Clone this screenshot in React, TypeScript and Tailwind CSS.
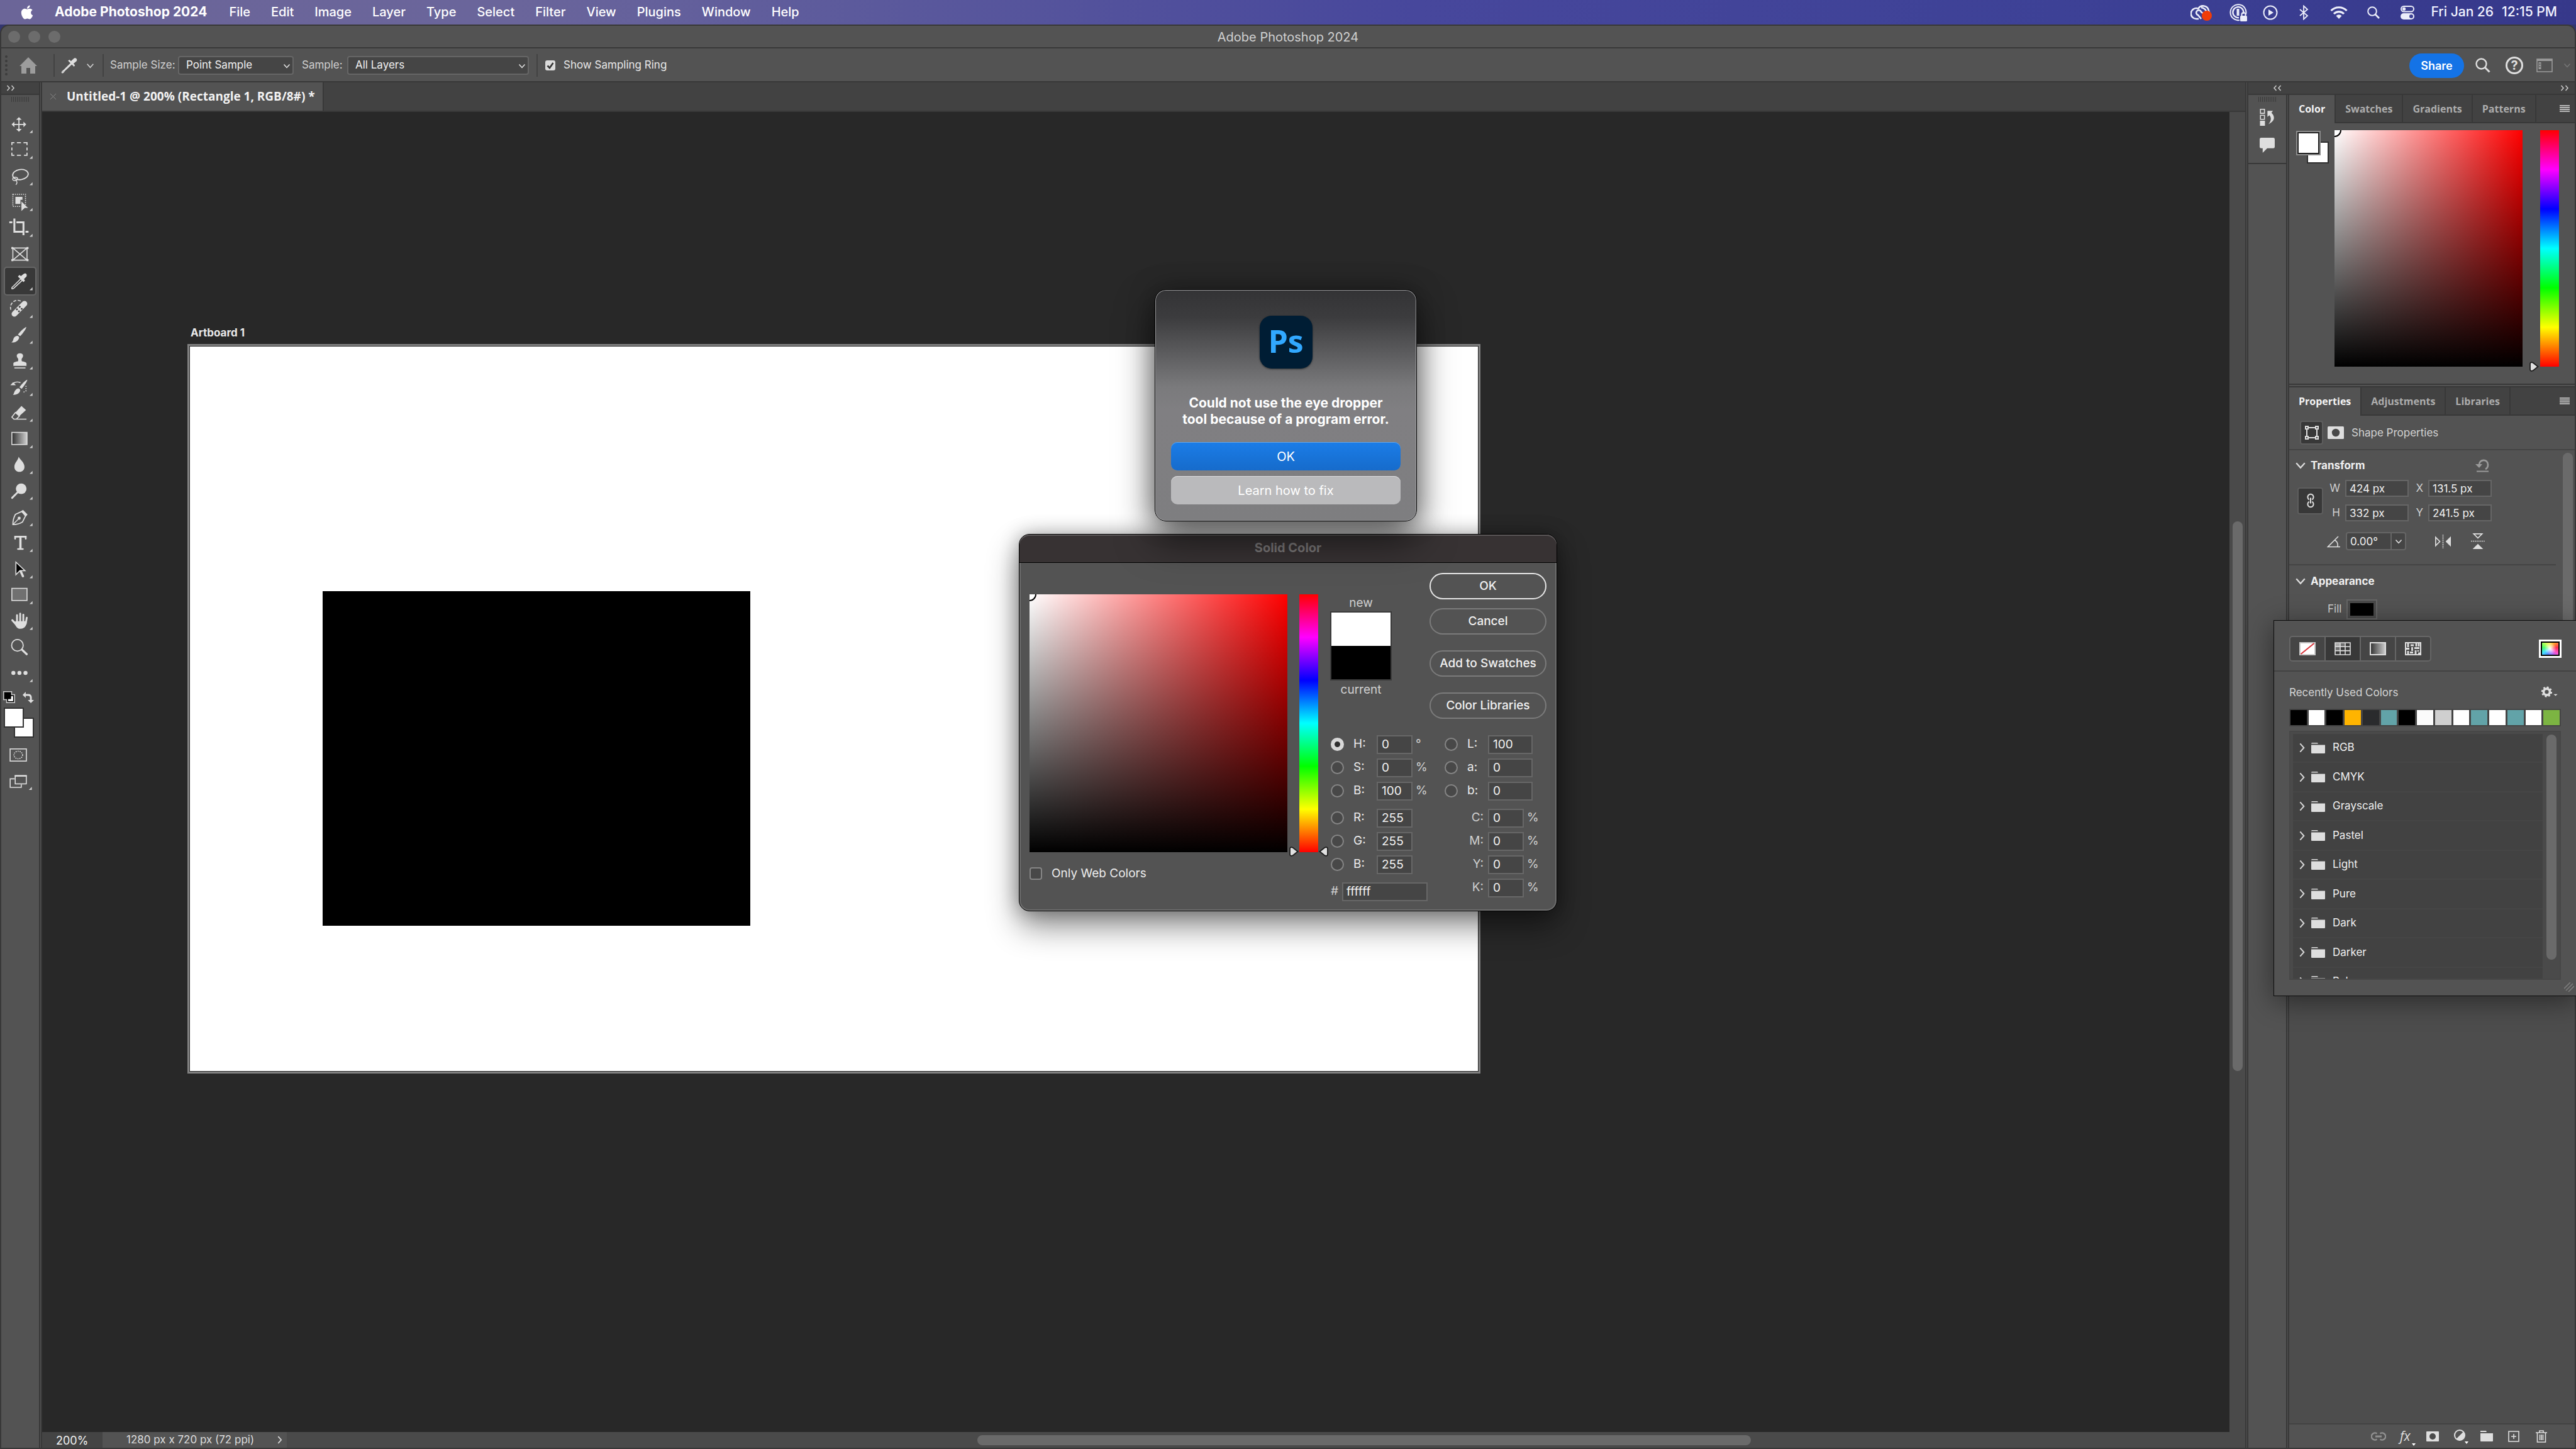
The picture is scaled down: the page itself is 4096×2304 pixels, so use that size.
import React from "react";
import clsx from "clsx";

/* ---------- small shared drawings ---------- */

const INK = "#dedede";

function Chevron({ dir = "down", className = "" }: { dir?: "down" | "right"; className?: string }) {
  return (
    <svg viewBox="0 0 12 12" fill="none" stroke="currentColor" strokeWidth="1.5" className={className} aria-hidden="true">
      {dir === "down" ? <path d="M1.5 3.5 6 8.5l4.5-5" /> : <path d="M4 1l4.5 5L4 11" />}
    </svg>
  );
}

function DoubleChevron({ dir, className = "" }: { dir: "left" | "right"; className?: string }) {
  return (
    <svg viewBox="0 0 14 12" fill="none" stroke="#c8c8c8" strokeWidth="1.6" className={className} aria-hidden="true">
      {dir === "right" ? <path d="M1.5 2 5 6l-3.500 4M8.500 2 12 6l-3.500 4" /> : <path d="M5.500 2 2 6l3.500 4M12.500 2 9 6l3.500 4" />}
    </svg>
  );
}

function Grip() {
  return (
    <div className="flex h-[8px] gap-[2px]">
      {Array.from({ length: 10 }, (_, i) => (
        <div key={i} className="w-px bg-[#3a3a3a]" />
      ))}
    </div>
  );
}

function Hamburger() {
  return (
    <button aria-label="Panel menu" className="flex h-[12px] w-[16px] flex-col justify-between">
      {[0, 1, 2, 3].map((i) => (
        <span key={i} className="block h-[2px] w-full bg-[#b4b4b4]" />
      ))}
    </button>
  );
}

/* ---------- menu bar ---------- */

const MENUS = ["File", "Edit", "Image", "Layer", "Type", "Select", "Filter", "View", "Plugins", "Window", "Help"];

function MenuBar() {
  return (
    <header className="flex h-[39px] shrink-0 items-center bg-[linear-gradient(to_right,#6b6598_0%,#6a659b_20%,#5c5a9c_33%,#47479c_55%,#3d4196_80%,#36388a_100%)] pr-[30px] pl-[32px] text-[20px] text-white">
      <svg viewBox="0 0 384 512" className="h-[25px] w-[22px]" fill="white" aria-label="Apple">
        <path d="M318.700 268.700c-.2-36.700 16.400-64.400 50-84.800-18.800-26.900-47.200-41.700-84.700-44.600-35.500-2.800-74.300 20.700-88.500 20.700-15 0-49.400-19.700-76.400-19.700C63.300 141.200 4 184.800 4 273.500q0 39.300 14.400 81.200c12.800 36.700 59 126.700 107.200 125.200 25.200-.6 43-17.900 75.800-17.900 31.800 0 48.300 17.900 76.400 17.900 48.600-.7 90.400-82.500 102.600-119.300-65.200-30.700-61.700-90-61.700-91.900zm-56.600-164.200c27.300-32.400 24.800-61.900 24-72.500-24.100 1.400-52 16.400-67.900 34.900-17.500 19.800-27.800 44.300-25.600 71.900 26.100 2 49.900-11.400 69.500-34.300z" />
      </svg>
      <nav className="ml-[33px] flex items-baseline gap-[33px] pb-[2px]">
        <button className="mr-[2px] text-[21px] font-bold">Adobe Photoshop 2024</button>
        {MENUS.map((m) => (
          <button key={m} className="font-medium">{m}</button>
        ))}
      </nav>
      <div className="ml-auto flex items-center">
        <svg viewBox="0 0 34 28" className="mr-[27px] h-[28px] w-[34px]" fill="none" stroke="#eceefa" strokeWidth="2.600">
          <path d="M13 24H10a8.500 8.500 0 1 1 2-16.500M12 8.500A9 9 0 0 1 29 11c.8 1.500 1 3 1 4" />
          <path d="M17 24 12 18a4 4 0 1 1 5-5l4 3M17 6a10 10 0 0 1 9 9" />
          <circle cx="26" cy="19" r="8" fill="#f03c08" stroke="none" />
        </svg>
        <svg viewBox="0 0 30 30" className="mr-[24px] h-[30px] w-[30px]" fill="none" stroke="#eceefa" strokeWidth="2">
          <path d="M17 27a12.500 12.500 0 1 1 10-9" />
          <path d="M16 23a8.500 8.500 0 1 1 7-6" strokeWidth="2.400" />
          <path d="M14.500 9v11" strokeWidth="4" />
          <rect x="18" y="20" width="11" height="9" rx="1.500" fill="#eceefa" stroke="none" />
          <path d="M20.500 20v-2a3 3 0 0 1 6 0v2" />
        </svg>
        <svg viewBox="0 0 24 24" className="mr-[33px] h-[24px] w-[24px]" fill="none" stroke="#eceefa" strokeWidth="2">
          <circle cx="12" cy="12" r="10.500" />
          <path d="M9 7v10l8-5z" fill="#eceefa" stroke="none" />
        </svg>
        <svg viewBox="0 0 16 24" className="mr-[34px] h-[24px] w-[16px]" fill="none" stroke="#eceefa" strokeWidth="1.800">
          <path d="M2 7l12 10-6 5.500v-21L14 7 2 17" />
        </svg>
        <svg viewBox="0 0 28 20" className="mr-[31px] h-[20px] w-[28px]" fill="none" stroke="#eceefa" strokeWidth="3.200">
          <path d="M1.500 7a17.500 17.500 0 0 1 25 0M6 12a11.200 11.200 0 0 1 16 0" />
          <path d="M9.500 15.200a6.300 6.300 0 0 1 9 0L14 20z" fill="#eceefa" stroke="none" />
        </svg>
        <svg viewBox="0 0 20 20" className="mr-[33px] h-[20px] w-[20px]" fill="none" stroke="#eceefa" strokeWidth="2">
          <circle cx="8" cy="8" r="6.800" />
          <path d="M13 13l6 6" strokeWidth="2.600" />
        </svg>
        <svg viewBox="0 0 22 22" className="mr-[27px] h-[22px] w-[22px]" fill="none" stroke="#eceefa" strokeWidth="2">
          <rect x="1" y="1" width="20" height="8.500" rx="4.250" />
          <circle cx="5.500" cy="5.200" r="2.600" fill="#eceefa" stroke="none" />
          <rect x="0" y="12" width="22" height="10" rx="5" fill="#eceefa" stroke="none" />
          <circle cx="17" cy="17" r="3" fill="#3b3f93" stroke="none" />
        </svg>
        <span className="flex gap-[13px] pb-[2px] text-[21px] font-medium text-[#f2f3ff]">
          <span>Fri Jan 26</span>
          <span>12:15 PM</span>
        </span>
      </div>
    </header>
  );
}

/* ---------- title + options bars ---------- */

function TitleBar() {
  return (
    <div className="relative flex h-[36px] shrink-0 items-center border-b-2 border-[#383838] pl-[11px]">
      <div className="flex gap-[13px]">
        {["Close", "Minimize", "Zoom"].map((n) => (
          <button key={n} aria-label={n} className="size-[19px] rounded-full bg-[#6c6c6c]" />
        ))}
      </div>
      <h1 className="absolute inset-x-0 pt-[2px] text-center text-[20px] text-[#d0d0d0]">Adobe Photoshop 2024</h1>
    </div>
  );
}

function Select({ id, value, width }: { id: string; value: string; width: string }) {
  return (
    <div className={clsx("relative", width)}>
      <select id={id} defaultValue={value} className="h-[30px] w-full appearance-none rounded-[4px] border-2 border-[#666] bg-[#454545] pl-[11px] text-[17px] text-[#f0f0f0]">
        <option>{value}</option>
      </select>
      <Chevron className="pointer-events-none absolute top-[10px] right-[5px] size-[12px] text-[#e6e6e6]" />
    </div>
  );
}

function Eyedropper({ className = "" }: { className?: string }) {
  return (
    <svg viewBox="19 10 34 34" className={className} fill="none" aria-hidden="true">
      <path d="M40 21 25 36c-2 2-5 2-4 5 3 1 3-2 5-4l15-14z" stroke={INK} strokeWidth="2" />
      <path d="M33 17l3-2 3 3 5-5c4-4 9 1 6 5l-6 5 3 3-2 3z" fill={INK} />
    </svg>
  );
}

function OptionsBar() {
  const sep = <div className="h-[36px] w-[2px] bg-[#424242]" />;
  return (
    <div className="flex h-[54px] shrink-0 items-center border-b-2 border-[#383838] pt-[2px] text-[17px] text-[#cfcfcf]">
      <div className="ml-[6px] h-[32px] w-0 border-l-4 border-dotted border-[#3c3c3c]" />
      <button aria-label="Home" className="ml-[19px]">
        <svg viewBox="0 0 28 26" className="h-[26px] w-[28px]" fill="#9c9c9c">
          <path d="M14 0 28 14h-3v12h-8v-9h-6v9H3V14H0z" />
        </svg>
      </button>
      <div className="ml-[26px]">{sep}</div>
      <button aria-label="Eyedropper tool presets" className="ml-[10px] flex items-center gap-[13px]">
        <Eyedropper className="size-[27px]" />
        <Chevron className="size-[13px]" />
      </button>
      <div className="mr-[10px] ml-[13px]">{sep}</div>
      <label htmlFor="sample-size" className="w-[108px]">Sample Size:</label>
      <Select id="sample-size" value="Point Sample" width="w-[184px]" />
      <label htmlFor="sample-layers" className="ml-[13px] w-[72px]">Sample:</label>
      <Select id="sample-layers" value="All Layers" width="w-[289px]" />
      <div className="mr-[12px] ml-[12px]">{sep}</div>
      <label className="flex items-center gap-[13px] text-[#e8e8e8]">
        <span className="relative size-[16px]">
          <input type="checkbox" defaultChecked className="block size-[16px] appearance-none rounded-[3px] bg-[#dcdcdc]" />
          <svg viewBox="0 0 16 16" className="pointer-events-none absolute inset-0 size-[16px]" fill="none" stroke="#333" strokeWidth="2.600">
            <path d="M3.500 8.500 7 12l5.500-8" />
          </svg>
        </span>
        Show Sampling Ring
      </label>
      <div className="ml-auto flex items-center pr-[6px]">
        <button className="h-[39px] w-[87px] rounded-full bg-[#1473e6] text-[18px] font-semibold text-white">Share</button>
        <svg viewBox="0 0 24 24" className="ml-[18px] size-[24px]" fill="none" stroke={INK} strokeWidth="2.400">
          <circle cx="9.500" cy="9.500" r="8" />
          <path d="M15.500 15.500 22.500 22.500" strokeWidth="3" />
        </svg>
        <button aria-label="Help" className="ml-[24px] flex size-[28px] items-center justify-center rounded-full border-[3px] border-[#dedede] text-[20px] font-bold text-[#dedede]">?</button>
        <svg viewBox="0 0 26 22" className="ml-[21px] h-[22px] w-[26px]" fill="none" stroke="#9a9a9a" strokeWidth="1.600">
          <rect x="1" y="1" width="24" height="20" />
          <path d="M1 2.500h24" strokeWidth="3" />
          <path d="M5.500 6v11" strokeWidth="4" />
          <path d="M5.500 8v2m0 2v2" stroke="#535353" />
        </svg>
        <Chevron className="ml-[17px] size-[12px] text-[#777]" />
      </div>
    </div>
  );
}

/* ---------- toolbox ---------- */

const T: { name: string; art: React.ReactNode; more?: boolean }[] = [
  {
    name: "Move",
    art: (
      <>
        <path d="M35 17v20M25 27h20" stroke={INK} strokeWidth="2.200" />
        <path d="M35 12.500l5.500 5.500h-11zM35 41.500l5.500-5.500h-11zM20.500 27l5.500-5.500v11zM49.500 27 44 21.500v11z" fill={INK} />
      </>
    ),
  },
  {
    name: "Rectangular marquee",
    art: (
      <path
        d="M21 17v-5h5M31 12h8M44 12h7v5M51 21.500v6M51 32v5h-6M39 37h-8M26 37h-5v-5M21 27.500v-6"
        stroke={INK}
        strokeWidth="2.200"
        fill="none"
      />
    ),
  },
  {
    name: "Lasso",
    art: (
      <g fill="none" stroke={INK} strokeWidth="2.200">
        <ellipse cx="38" cy="23" rx="15.500" ry="10" transform="rotate(-8 38 23)" />
        <path d="M25 28c-4 3-3 7 2 7s7-4 4-6-8 0-8 2M28 34c4 2 4 6 1 9" strokeWidth="1.800" />
      </g>
    ),
  },
  {
    name: "Object selection",
    art: (
      <>
        <rect x="23" y="11" width="25" height="24" fill="none" stroke={INK} strokeWidth="2" strokeDasharray="2 2" />
        <path d="M28 16h14v6l-4 0v8H28z" fill={INK} />
        <path d="M39.500 24 54 38.500h-7.500L39.500 45z" fill={INK} stroke="#535353" strokeWidth="1" />
      </>
    ),
  },
  {
    name: "Crop",
    art: (
      <path d="M26 8v26h17M16 15.500h6M30 15.500h14V41M48 34h6" stroke={INK} strokeWidth="3.800" fill="none" />
    ),
  },
  {
    name: "Frame",
    more: false,
    art: (
      <>
        <path d="M23 14h28v24H23zM23 14l28 24M51 14 23 38" fill="none" stroke={INK} strokeWidth="2" />
        <path d="M20 12h4v4h-4zM50 12h4v4h-4zM20 36h4v4h-4zM50 36h4v4h-4z" fill={INK} />
      </>
    ),
  },
  {
    name: "Eyedropper",
    art: (
      <>
        <path d="M39 21 24 36c-2 2-4 2-3 5 3 1 4-1 6-3l15-14z" fill="none" stroke={INK} strokeWidth="2" />
        <path d="M33 17l3-3 3 2 5-4c4-3 8 0 6 5l-5 5 2 3-3 3z" fill={INK} />
      </>
    ),
  },
  {
    name: "Spot healing brush",
    art: (
      <>
        <path d="M26 36 46 16" stroke={INK} strokeWidth="11" strokeLinecap="round" />
        <path d="M19 28c-2-6 0-12 5-16s11-3 15-1" fill="none" stroke={INK} strokeWidth="2" strokeDasharray="6 3" />
        <g fill="#484848">
          <circle cx="36.500" cy="22" r="2" />
          <circle cx="40.500" cy="26" r="2" />
          <circle cx="31" cy="27" r="2" />
          <circle cx="35" cy="31" r="2" />
        </g>
      </>
    ),
  },
  {
    name: "Brush",
    art: (
      <>
        <path d="M33 26C38 19 46 12 49.500 11c1 1-5 11-12 18z" fill={INK} />
        <path d="M32 28.500c5 1 4 6 0 9.500-3 3-8 4-12 3.500 4-2 3-5 5-9 2-3 5-4 7-4z" fill={INK} />
      </>
    ),
  },
  {
    name: "Clone stamp",
    art: (
      <>
        <path d="M37 12c8 0 7 7 4 10-1 2-1 4 0 6 5 1 9 2 9 4v5H24v-5c0-2 4-3 9-4 1-2 1-4 0-6-3-3-4-10 4-10z" fill={INK} />
        <path d="M26 41h22" stroke={INK} strokeWidth="2" />
      </>
    ),
  },
  {
    name: "History brush",
    art: (
      <>
        <path d="M36 27c5-7 11-13 15.500-15 1 1-5 11-11 18z" fill={INK} />
        <path d="M34 29c5 1 4 6 1 9-3 3-8 4-12 4 3-2 2-6 5-9 2-3 4-4 6-4z" fill={INK} />
        <path d="M18 23l5.500-6 5.500 6z" fill={INK} />
        <path d="M24 19c4-3 10-3 14-1" fill="none" stroke={INK} strokeWidth="2" />
        <path d="M49 24v10l-7 4" fill="none" stroke={INK} strokeWidth="2" strokeDasharray="2 2.500" />
      </>
    ),
  },
  {
    name: "Eraser",
    art: (
      <>
        <path d="M40 13l9 8-13 12-8-7z" fill={INK} />
        <path d="M28 26l8 7-6 6h-5l-4-4z M27 39h23" fill="none" stroke={INK} strokeWidth="2" />
      </>
    ),
  },
  {
    name: "Gradient",
    art: <rect x="21" y="13" width="30" height="24" fill="url(#toolGradient)" stroke={INK} strokeWidth="2" />,
  },
  {
    name: "Blur",
    art: <path d="M34.500 10C37 16 46 21 46 30c0 6-4 10-10 10s-10-4-10-10c0-8 7-12 8.500-20z" fill={INK} />,
  },
  {
    name: "Dodge",
    art: (
      <>
        <circle cx="39.500" cy="22.500" r="10.500" fill={INK} />
        <path d="M32 30 21.500 40.500" stroke={INK} strokeWidth="3.600" strokeLinecap="round" />
      </>
    ),
  },
  {
    name: "Pen",
    art: (
      <>
        <path d="M41 15 28 21c-4 7-5 13-5 20 6 0 13-1 19-5l6-12z" fill="none" stroke={INK} strokeWidth="2.200" />
        <path d="M23.500 40.500 34 30" stroke={INK} strokeWidth="1.800" />
        <circle cx="35.500" cy="28.500" r="3" fill={INK} />
        <path d="M43 12l9 9-3 4-10-10z" fill={INK} />
      </>
    ),
  },
  {
    name: "Type",
    art: (
      <g fill="none" stroke={INK} strokeLinecap="round">
        <path d="M27.500 18v-4h21v4" strokeWidth="3.400" />
        <path d="M38 14v24" strokeWidth="4.400" strokeLinecap="butt" />
        <path d="M33 38.500h10" strokeWidth="3" />
      </g>
    ),
  },
  {
    name: "Path selection",
    art: (
      <>
        <path d="M38 29l5 11" stroke={INK} strokeWidth="4.400" strokeLinecap="round" />
        <path d="M29 12v25l8-8h10z" fill="#000" stroke={INK} strokeWidth="2" />
      </>
    ),
  },
  {
    name: "Rectangle",
    art: <rect x="21" y="13" width="30" height="24" fill="#707070" stroke={INK} strokeWidth="2" />,
  },
  {
    name: "Hand",
    art: (
      <>
        <path d="M31.200 15v14M37.500 12v16M43.700 14v15M50.500 20l-2 12" stroke={INK} strokeWidth="3.600" strokeLinecap="round" />
        <path d="M22 25l8 9" stroke={INK} strokeWidth="4" strokeLinecap="round" />
        <path d="M29 27h21c1 6-2 15-12 15-8 0-9-6-13-13z" fill={INK} />
      </>
    ),
  },
  {
    name: "Zoom",
    more: false,
    art: (
      <>
        <circle cx="32" cy="22.500" r="11.500" fill="none" stroke={INK} strokeWidth="2.200" />
        <path d="M41 31l9.500 9" stroke={INK} strokeWidth="4" strokeLinecap="round" />
      </>
    ),
  },
  {
    name: "Edit toolbar",
    art: (
      <g fill={INK}>
        <circle cx="24" cy="26" r="4" />
        <circle cx="36" cy="26" r="4" />
        <circle cx="48" cy="26" r="4" />
      </g>
    ),
  },
];

function Toolbox() {
  return (
    <aside className="flex w-[62px] shrink-0 flex-col border-r-2 border-[#383838]">
      <button aria-label="Expand toolbar" className="flex h-[20px] items-center border-b-2 border-[#383838] bg-[#424242] pl-[8px]">
        <DoubleChevron dir="right" className="h-[12px] w-[14px]" />
      </button>
      <div className="flex h-[25px] items-start justify-center pt-[3px]">
        <Grip />
      </div>
      <div className="flex h-[915px] flex-col">
        {T.map((t) => (
          <button
            key={t.name}
            aria-label={t.name}
            className={clsx(
              "flex min-h-0 flex-1 items-center justify-center",
              t.name === "Eyedropper" && "mx-[4px] rounded-[5px] border-2 border-[#666] bg-[#383838]",
            )}
          >
            <svg viewBox="0 0 76 52" className="h-[42px] w-[61px] shrink-0">
              <defs>
                <linearGradient id="toolGradient">
                  <stop offset="0" stopColor="#303030" />
                  <stop offset="1" stopColor="#cfcfcf" />
                </linearGradient>
              </defs>
              {t.art}
              {t.more !== false && <path d="M62 38v6h-6z" fill="#d0d0d0" />}
            </svg>
          </button>
        ))}
      </div>
      <div className="mt-[8px] flex items-center justify-between pr-[8px] pl-[3px]">
        <button aria-label="Default colors">
          <svg viewBox="0 0 24 24" className="size-[19px]">
            <path d="M0 0h18v6h6v18H6v-6H0z" fill="#c8c8c8" />
            <path d="M8 8h14v14H8z" fill="#000" />
            <path d="M10 10h10v10H10z" fill="#fff" />
            <path d="M2 2h14v14H2z" fill="#000" />
          </svg>
        </button>
        <button aria-label="Switch colors">
          <svg viewBox="0 0 22 22" className="size-[18px]">
            <path d="M6 6h5q5 0 5 5v5" fill="none" stroke={INK} strokeWidth="3.600" />
            <path d="M0 6l6-6v12zM16 22l-6-6h12z" fill={INK} />
          </svg>
        </button>
      </div>
      <div className="mt-[7px] ml-[4px] grid h-[48px] w-[48px] grid-cols-3 grid-rows-3">
        <button aria-label="Background color" className="col-span-2 col-start-2 row-span-2 row-start-2 border-2 border-[#333] bg-white" />
        <button aria-label="Foreground color" className="col-span-2 col-start-1 row-span-2 row-start-1 border-2 border-[#333] bg-white" />
      </div>
      <button aria-label="Quick mask" className="mt-[17px] ml-[13px]">
        <svg viewBox="0 0 34 26" className="h-[21px] w-[28px]" fill="none" stroke={INK} strokeWidth="2">
          <rect x="1" y="1" width="32" height="24" />
          <ellipse cx="17" cy="13" rx="8.500" ry="7.500" strokeDasharray="2 2" />
        </svg>
      </button>
      <button aria-label="Screen mode" className="mt-[21px] ml-[13px]">
        <svg viewBox="0 0 44 30" className="h-[24px] w-[36px]" fill="none" stroke={INK} strokeWidth="2">
          <path d="M10 8H1v17h22v-6M1 8h9" />
          <rect x="11" y="2" width="22" height="16" />
          <path d="M10 2h24" strokeWidth="3" />
          <path d="M44 24v6h-6z" fill="#d0d0d0" stroke="none" />
        </svg>
      </button>
    </aside>
  );
}

/* ---------- document ---------- */

function DocumentArea() {
  return (
    <main className="ml-[1px] flex min-w-0 flex-1 flex-col border-x-2 border-[#383838]">
      <div className="flex h-[47px] shrink-0 border-b-2 border-[#383838] bg-[#424242]">
        <div className="flex items-center border-r-2 border-[#383838] bg-[#535353] pr-[12px] pl-[12px]">
          <button aria-label="Close document" className="text-[#8a8a8a]">
            <svg viewBox="0 0 12 12" className="size-[11px]" stroke="currentColor" fill="none">
              <path d="M1 1l10 10M11 1 1 11" />
            </svg>
          </button>
          <span className="ml-[16px] font-[Open_Sans] text-[19px] font-bold whitespace-nowrap text-[#f2f2f2]">
            Untitled-1 @ 200% (Rectangle 1, RGB/8#) *
          </span>
        </div>
      </div>
      <div className="flex min-h-0 flex-1">
        <div className="relative min-w-0 flex-1 overflow-hidden bg-[#282828]">
          <p className="absolute top-[339px] left-[236px] text-[17px] font-bold text-[#e8e8e8]">Artboard 1</p>
          <div className="absolute top-[369px] left-[231px] h-[1160px] w-[2056px] border-[3px] border-[#808080] bg-white outline-1 -outline-offset-4 outline-[#222]">
            <div className="absolute top-[390px] left-[212px] h-[532px] w-[680px] bg-black" />
          </div>
        </div>
        <div className="flex w-[25px] flex-col items-center bg-[#4a4a4a]">
          <div className="grow-[651]" />
          <div className="w-[16px] grow-[874] rounded-full bg-[#6a6a6a]" />
          <div className="grow-[574]" />
        </div>
      </div>
      <footer className="flex h-[25px] shrink-0 items-center bg-[#4a4a4a] text-[17px]">
        <div className="flex h-full w-[96px] items-center bg-[#444] pt-[2px] pl-[22px] text-[18px] text-[#f0f0f0]">200%</div>
        <div className="flex h-full w-[293px] items-center justify-between bg-[#535353] pr-[5px] pl-[38px] text-[#dcdcdc]">
          1280 px x 720 px (72 ppi)
          <Chevron dir="right" className="size-[13px]" />
        </div>
        <div className="flex min-w-0 flex-1">
          <div className="grow-[1098]" />
          <div className="h-[16px] grow-[1231] rounded-full bg-[#6a6a6a]" />
          <div className="grow-[786]" />
        </div>
      </footer>
    </main>
  );
}

/* ---------- colour fields ---------- */

function ColorField({ className }: { className: string }) {
  return (
    <div className={clsx("relative overflow-hidden bg-[linear-gradient(to_top,#000,transparent),linear-gradient(to_right,#fff,#f00)]", className)}>
      <div className="absolute -top-[11px] -left-[11px] size-[22px] rounded-full border-2 border-black bg-white" />
    </div>
  );
}

function HueStrip({ className }: { className: string }) {
  return <div className={clsx("bg-[linear-gradient(to_bottom,#f00,#f0f,#00f,#0ff,#0f0,#ff0,#f00)]", className)} />;
}

function HuePointer({ flip = false }: { flip?: boolean }) {
  return (
    <svg viewBox="0 0 15 16" className="h-[16px] w-[15px]" fill="#e0e0e0" stroke="#1c1c1c" strokeWidth="1.800">
      {flip ? <path d="M1.500 8 9 2c4-2 5 0 5 2v8c0 2-1 4-5 2z" /> : <path d="M13.500 8 6 2C2 0 1 2 1 4v8c0 2 1 4 5 2z" />}
    </svg>
  );
}

/* ---------- right panels ---------- */

function PanelTabs({ tabs }: { tabs: string[] }) {
  return (
    <div role="tablist" className="flex h-[45px] shrink-0 font-[Open_Sans] text-[16px] font-bold">
      {tabs.map((t, i) => (
        <button
          key={t}
          role="tab"
          aria-selected={i === 0}
          className={clsx(
            "border-r-2 border-[#383838] px-[15px]",
            i === 0 ? "pb-[2px] text-[#f4f4f4]" : "border-b-2 bg-[#424242] text-[#adadad]",
          )}
        >
          {t}
        </button>
      ))}
      <div className="flex flex-1 items-center justify-end border-b-2 border-[#383838] bg-[#424242] pr-[8px]">
        <Hamburger />
      </div>
    </div>
  );
}

function ColorPanel() {
  return (
    <section className="flex h-[461px] shrink-0 flex-col border-b-2 border-[#383838]">
      <PanelTabs tabs={["Color", "Swatches", "Gradients", "Patterns"]} />
      <div className="flex pt-[11px] pl-[13px]">
        <div className="mt-[3px] grid h-[50px] w-[50px] grid-cols-10 grid-rows-10">
          <button aria-label="Background" className="col-span-7 col-start-4 row-span-7 row-start-4 border-2 border-[#2e2e2e] bg-white" />
          <button aria-label="Foreground" className="col-span-7 col-start-1 row-span-7 row-start-1 border-2 border-[#222] bg-white outline-2 outline-[#8c8c8c]" />
        </div>
        <ColorField className="ml-[9px] h-[376px] min-w-0 flex-1" />
        <div className="ml-[11px] flex h-[384px] items-end">
          <HuePointer />
        </div>
        <HueStrip className="mr-[25px] ml-[2px] h-[376px] w-[30px]" />
      </div>
    </section>
  );
}

function NumberBox({ id, value }: { id: string; value: string }) {
  return <input id={id} defaultValue={value} className="h-[27px] w-[101px] border-2 border-[#666] bg-[#454545] pl-[5px] text-[17px] text-[#f0f0f0]" />;
}

function SectionTitle({ children }: { children: React.ReactNode }) {
  return (
    <div className="flex items-center gap-[7px]">
      <Chevron className="size-[18px] text-[#dedede]" />
      <h2 className="text-[17px] leading-[26px] font-bold text-[#f0f0f0]">{children}</h2>
    </div>
  );
}

function PropertiesPanel() {
  return (
    <section className="mt-[2px] flex h-[375px] shrink-0 flex-col overflow-hidden border-t-2 border-[#383838]">
      <PanelTabs tabs={["Properties", "Adjustments", "Libraries"]} />
      <div className="flex h-[55px] shrink-0 items-center border-b-2 border-[#444] pl-[17px] text-[17px] text-[#d2d2d2]">
        <button aria-label="Shape" className="flex h-[38px] w-[37px] items-center justify-center rounded-[4px] border-2 border-[#5e5e5e] bg-[#383838]">
          <svg viewBox="0 0 24 24" className="size-[24px]" fill="none" stroke={INK} strokeWidth="2">
            <path d="M5.500 4h13M5.500 20h13M4 5.500v13M20 5.500v13" />
            <path d="M2 2h4v4H2zM18 2h4v4h-4zM2 18h4v4H2zM18 18h4v4h-4z" fill="#383838" />
          </svg>
        </button>
        <svg viewBox="0 0 26 20" className="mr-[12px] ml-[7px] h-[20px] w-[26px]">
          <rect width="26" height="20" rx="1.500" fill={INK} />
          <circle cx="13" cy="10" r="6.200" fill="#4a4a4a" />
        </svg>
        <span className="pt-[2px]">Shape Properties</span>
      </div>
      <div className="flex min-h-0 flex-1">
        <div className="flex-1">
          <div className="border-b-2 border-[#444] pt-[11px] pb-[22px] pl-[9px]">
            <div className="flex items-center justify-between pr-[106px]">
              <SectionTitle>Transform</SectionTitle>
              <svg viewBox="0 0 22 22" className="h-[22px] w-[22px]" fill="none" stroke="#9a9a9a">
                <path d="M6 10C6 1 20 0 20 10c0 4-2 6-4 7" strokeWidth="2.600" />
                <path d="M0 9h11l-5 6z" fill="#9a9a9a" stroke="none" />
                <path d="M2 20.500h19" strokeWidth="2" />
              </svg>
            </div>
            <div className="mt-[10px] flex items-center text-[17px] text-[#cfcfcf]">
              <button aria-label="Link dimensions" className="ml-[4px] flex h-[43px] w-[41px] items-center justify-center rounded-[4px] border-2 border-[#5e5e5e] bg-[#383838]">
                <svg viewBox="0 0 14 26" className="h-[24px] w-[14px]" fill="none" stroke={INK} strokeWidth="2.200">
                  <path d="M4.500 11.200a5 5 0 1 1 5 0M4.500 14.800a5 5 0 1 0 5 0M7 8v10" />
                </svg>
              </button>
              <div className="ml-[7px] grid grid-cols-[20px_101px_15px_101px] items-center gap-x-[8px] gap-y-[12px]">
                <label htmlFor="pw" className="text-right">W</label>
                <NumberBox id="pw" value="424 px" />
                <label htmlFor="px" className="text-right">X</label>
                <NumberBox id="px" value="131.5 px" />
                <label htmlFor="ph" className="text-right">H</label>
                <NumberBox id="ph" value="332 px" />
                <label htmlFor="py" className="text-right">Y</label>
                <NumberBox id="py" value="241.5 px" />
              </div>
            </div>
            <div className="mt-[17px] flex items-center pl-[51px]">
              <svg viewBox="0 0 22 20" className="h-[20px] w-[22px]" fill="none" stroke={INK} strokeWidth="1.600">
                <path d="M18 2 1.500 18.500H21M12.500 8c4 2 5 6 4.500 10" />
              </svg>
              <div className="relative ml-[8px] flex">
                <input aria-label="Angle" defaultValue="0.00°" className="h-[29px] w-[73px] rounded-l-[4px] border-2 border-[#666] bg-[#454545] pl-[5px] text-[17px] text-[#f0f0f0]" />
                <button aria-label="Angle presets" className="flex h-[29px] w-[23px] items-center justify-center rounded-r-[4px] border-2 border-l-0 border-[#666] bg-[#454545] text-[#e6e6e6]">
                  <Chevron className="size-[12px]" />
                </button>
              </div>
              <button aria-label="Flip horizontal" className="ml-[46px]">
                <svg viewBox="0 0 30 26" className="h-[22px] w-[25px]" fill="none" stroke={INK} strokeWidth="2">
                  <path d="M1 5v16l8-8z" />
                  <path d="M15 0v26" strokeDasharray="2 1.500" />
                  <path d="M30 3v20L20 13z" fill={INK} stroke="none" />
                </svg>
              </button>
              <button aria-label="Flip vertical" className="ml-[32px]">
                <svg viewBox="0 0 26 30" className="h-[25px] w-[22px]" fill="none" stroke={INK} strokeWidth="2">
                  <path d="M5 1h16l-8 8z" />
                  <path d="M0 15h26" strokeDasharray="2 1.500" />
                  <path d="M3 30h20L13 20z" fill={INK} stroke="none" />
                </svg>
              </button>
            </div>
          </div>
          <div className="pt-[12px] pl-[9px]">
            <SectionTitle>Appearance</SectionTitle>
            <div className="mt-[16px] flex items-center gap-[8px] pl-[52px] text-[17px] text-[#cfcfcf]">
              Fill
              <button aria-label="Fill color" className="h-[32px] w-[49px] border-2 border-[#666] bg-[#4a4a4a] p-[4px]">
                <span className="block h-full bg-black" />
              </button>
            </div>
          </div>
        </div>
        <div className="w-[30px] pt-[4px] pl-[11px]">
          <div className="h-full w-[16px] rounded-t-full bg-[#6a6a6a]" />
        </div>
      </div>
    </section>
  );
}

function LayerActions() {
  return (
    <div className="flex h-[39px] shrink-0 items-center border-t-2 border-[#424242] bg-[#535353] pl-[130px]">
      <svg viewBox="0 0 24 18" className="h-[18px] w-[24px]" fill="none" stroke="#909090" strokeWidth="2.400">
        <path d="M9.500 13.500A5.500 5.500 0 1 1 9.500 4.500M14.500 13.500A5.500 5.500 0 1 0 14.500 4.500" />
        <path d="M7 9h10" strokeWidth="3" />
      </svg>
      <button className="relative ml-[22px] w-[26px] pb-[2px] text-left font-[Open_Sans] text-[21px] leading-[24px] text-[#dedede] italic">
        fx
        <svg viewBox="0 0 6 4" className="absolute right-[1px] -bottom-[2px] h-[4px] w-[6px]" fill="#fff"><path d="M0 0h6L3 4z" /></svg>
      </button>
      <svg viewBox="0 0 20 20" className="ml-[16px] size-[20px]">
        <rect width="20" height="16" y="2" rx="1" fill={INK} />
        <circle cx="10" cy="10" r="5" fill="#4a4a4a" />
      </svg>
      <svg viewBox="0 0 24 24" className="ml-[24px] size-[24px]">
        <circle cx="9" cy="10" r="8" fill="none" stroke={INK} strokeWidth="2" />
        <path d="M3.500 16 15 4.500A8 8 0 0 1 3.500 16z" fill={INK} />
        <path d="M17 20h6l-3 4z" fill="#fff" />
      </svg>
      <svg viewBox="0 0 20 17" className="ml-[18px] h-[17px] w-[20px]" fill={INK}>
        <path d="M0 0h9l1 2H0zM0 4h20v12a1 1 0 0 1-1 1H1a1 1 0 0 1-1-1z" />
      </svg>
      <svg viewBox="0 0 18 18" className="ml-[24px] size-[18px]" fill="none" stroke={INK} strokeWidth="1.600">
        <path d="M1 1h16v16H1zM9 5v8M5 9h8" />
      </svg>
      <svg viewBox="0 0 18 20" className="ml-[26px] h-[20px] w-[18px]" fill="none" stroke={INK} strokeWidth="1.600">
        <path d="M0 4h18M2.500 4v15h13V4M6 4V1h6v3M6.500 7v9M9 7v9M11.500 7v9" />
      </svg>
    </div>
  );
}

function RightDock() {
  return (
    <aside className="ml-[1px] flex w-[521px] shrink-0 flex-col border-l-2 border-[#383838]">
      <div className="flex h-[20px] shrink-0 items-center justify-between border-b-2 border-[#383838] bg-[#424242] pr-[9px] pl-[39px]">
        <DoubleChevron dir="left" className="h-[12px] w-[14px]" />
        <DoubleChevron dir="right" className="h-[12px] w-[14px]" />
      </div>
      <div className="flex min-h-0 flex-1">
        <div className="w-[62px] shrink-0 border-r-2 border-[#383838]">
          <div className="flex h-[110px] flex-col items-center border-b-2 border-[#383838] pt-[3px]">
            <Grip />
            <button aria-label="History" className="mt-[11px]">
              <svg viewBox="0 0 29 34" className="h-[27px] w-[24px]" fill="none" stroke={INK} strokeWidth="2">
                <path d="M1 1h8v8H1zM1 13h8v8H1z" />
                <path d="M0 24h10v10H0z" fill={INK} stroke="none" />
                <path d="M15 4h11l-3 4c7 7 8 16-6 23 6-8 6-13 2-18l-4 3z" fill={INK} stroke="none" />
              </svg>
            </button>
            <button aria-label="Comments" className="mt-[19px]">
              <svg viewBox="0 0 30 30" className="size-[24px]" fill={INK}>
                <path d="M3 0h24a3 3 0 0 1 3 3v15a3 3 0 0 1-3 3H15l-9 9v-9H3a3 3 0 0 1-3-3V3a3 3 0 0 1 3-3z" />
              </svg>
            </button>
          </div>
        </div>
        <div className="ml-[1px] flex min-w-0 flex-1 flex-col border-l-2 border-[#383838]">
          <ColorPanel />
          <PropertiesPanel />
          <div className="flex-1 bg-[#4d4d4d]" />
          <LayerActions />
        </div>
      </div>
    </aside>
  );
}

/* ---------- fill popup ---------- */

const FOLDERS = ["RGB", "CMYK", "Grayscale", "Pastel", "Light", "Pure", "Dark", "Darker", "Pale"];
const RECENT = [
  "bg-black", "bg-white", "bg-black", "bg-[#ffb400]", "bg-[#2a2b2d]", "bg-[#62a3a8]", "bg-black", "bg-[#fbfbfb]",
  "bg-[#cfcfcf]", "bg-white", "bg-[#62a3a8]", "bg-white", "bg-[#62a3a8]", "bg-white", "bg-[#7cb442]",
];

function FillPopup() {
  const cell = "flex flex-1 items-center justify-center border-r-2 border-[#666] last:border-r-0";
  return (
    <div className="absolute top-[986px] right-0 flex h-[598px] w-[481px] flex-col border border-r-0 border-[#0c0c0c] bg-[#535353] shadow-[0_8px_40px_rgba(0,0,0,0.45)]">
      <div className="flex h-[81px] items-center justify-between border-b-2 border-[#434343] pt-[9px] pr-[23px] pl-[24px]">
        <div className="flex h-[41px] w-[226px] overflow-hidden rounded-[5px] border-2 border-[#666] bg-[#454545]">
          <button aria-label="No fill" className={cell}>
            <svg viewBox="0 0 26 21" className="h-[21px] w-[26px]">
              <rect x="1" y="1" width="24" height="19" fill="#fff" stroke="#c9c9c9" strokeWidth="2" />
              <path d="M2.500 19 23.500 2" stroke="#d8333a" strokeWidth="2" />
            </svg>
          </button>
          <button aria-label="Solid color" className={clsx(cell, "bg-[#383838]")}>
            <svg viewBox="0 0 26 21" className="h-[21px] w-[26px]" fill="none" stroke={INK} strokeWidth="1.600">
              <path d="M1 1h8v6H1z" fill="#aaa" stroke="none" />
              <path d="M9 1h8v6H9zM1 7h8v6H1z" fill="#6e6e6e" stroke="none" />
              <path d="M1 1h24v19H1zM1 7.300h24M1 13.600h24M9 1v19M17 1v19" />
            </svg>
          </button>
          <button aria-label="Gradient" className={cell}>
            <svg viewBox="0 0 26 21" className="h-[21px] w-[26px]">
              <rect x="1" y="1" width="24" height="19" fill="url(#toolGradient)" stroke={INK} strokeWidth="2" />
            </svg>
          </button>
          <button aria-label="Pattern" className={cell}>
            <svg viewBox="0 0 26 21" className="h-[21px] w-[26px]" fill="none" stroke={INK}>
              <rect x="1" y="1" width="24" height="19" strokeWidth="2" />
              <path d="M5 2v6M9 5h5M18 2v5M22 2v5M2 10.500h5M11.500 8v6M15 9.500h8M5 14v5M8 16.500h5M17 13v6M21 13v2M21 18h4" strokeWidth="2.800" />
            </svg>
          </button>
        </div>
        <button aria-label="Color picker" className="h-[29px] w-[36px] border-[3px] border-white bg-black p-[2px]">
          <span className="block h-full bg-[radial-gradient(circle_at_50%_50%,#fff_0%,transparent_60%),conic-gradient(from_0deg,#ffe14d,#ff9a2e,#ff2e4d,#ff4fc8,#a06bff,#4f7dff,#45e0ff,#4dff6a,#c8ff5a,#ffe14d)]" />
        </button>
      </div>
      <div className="flex items-center justify-between pt-[20px] pr-[27px] pl-[24px]">
        <h3 className="text-[17px] leading-[26px] text-[#d4d4d4]">Recently Used Colors</h3>
        <button aria-label="Swatch options" className="relative">
          <svg viewBox="0 0 28 22" className="h-[20px] w-[30px]">
            <circle cx="9" cy="10" r="5.500" fill="none" stroke={INK} strokeWidth="4" />
            <circle cx="9" cy="10" r="8" fill="none" stroke={INK} strokeWidth="3" strokeDasharray="3.140 3.140" />
            <path d="M21 14h7l-3.500 3z" fill={INK} />
          </svg>
        </button>
      </div>
      <div className="mt-[13px] mr-[24px] ml-[24px] grid h-[28px] grid-cols-15 gap-[3px] bg-[#454545] p-[2px]">
        {RECENT.map((c, i) => (
          <button key={i} aria-label={`Recent color ${i + 1}`} className={c} />
        ))}
      </div>
      <div className="mx-[24px] mt-[7px] flex h-[396px] overflow-hidden border-2 border-[#474747] bg-[#4a4a4a]">
        <div className="flex h-[421px] flex-1 flex-col pt-[3px] pl-[4px]">
          {FOLDERS.map((f) => (
            <button key={f} className="flex min-h-0 flex-1 items-center border-b-2 border-[#464646] bg-[#424242] text-[17px] text-[#f0f0f0]">
              <Chevron dir="right" className="ml-[6px] h-[16px] w-[16px] text-[#d8d8d8]" />
              <svg viewBox="0 0 22 17" className="mr-[12px] ml-[7px] h-[17px] w-[22px]" fill={INK}>
                <path d="M0 1 1 0h9l1 1.500H0zM0 3.500h22V16a1 1 0 0 1-1 1H1a1 1 0 0 1-1-1z" />
              </svg>
              {f}
            </button>
          ))}
        </div>
        <div className="w-[27px] pt-[4px] pl-[6px]">
          <div className="h-[358px] w-[16px] rounded-full bg-[#6a6a6a]" />
        </div>
      </div>
      <svg viewBox="0 0 16 16" className="absolute right-[3px] bottom-[5px] size-[16px]" stroke="#7d7d7d" strokeWidth="1.600">
        <path d="M0 10 10 0M3 13 14 2M7 15l9-9" />
      </svg>
    </div>
  );
}

/* ---------- dialogs ---------- */

function ErrorDialog() {
  return (
    <div role="alertdialog" aria-label="Error" className="absolute top-[460px] left-[1836px] flex w-[417px] flex-col items-center rounded-[18px] border border-black bg-[linear-gradient(to_bottom,#333335_0%,#3c3c3e_12%,#7a7a7c_42%,#807f82_52%,#7e7e80_100%)] px-[25px] pt-[41px] pb-[26px] shadow-[inset_0_0_0_1px_#9a9a9c,0_30px_60px_rgba(0,0,0,0.55),0_0_40px_rgba(0,0,0,0.35)]">
      <div className="flex size-[84px] items-center justify-center rounded-[19px] bg-[#001d34] pb-[4px] font-[Open_Sans] text-[50px] font-bold text-[#31a8ff] shadow-[0_1px_3px_rgba(0,0,0,0.5)]">
        Ps
      </div>
      <p className="mt-[42px] text-center text-[21px] leading-[26px] font-bold whitespace-nowrap text-white">
        Could not use the eye dropper
        <br />
        tool because of a program error.
      </p>
      <button className="mt-[23px] h-[45px] w-full rounded-[10px] bg-linear-to-b from-[#1b7de8] to-[#166bcb] text-[20px] text-white shadow-[inset_0_1px_0_#5ca4ef]">OK</button>
      <button className="mt-[9px] h-[45px] w-full rounded-[10px] bg-[#bababc] text-[20px] text-white shadow-[inset_0_1px_0_#dedee0]">Learn how to fix</button>
    </div>
  );
}

function Channel({
  group,
  label,
  value,
  unit = "",
  radio = true,
  checked = false,
  wide = false,
  right = false,
}: {
  group: string;
  label: string;
  value: string;
  unit?: string;
  radio?: boolean;
  checked?: boolean;
  wide?: boolean;
  right?: boolean;
}) {
  const id = `${group}-${label}`;
  return (
    <div className="flex h-[37px] items-center text-[19px]">
      {radio && (
        <input
          type="radio"
          name="channel"
          aria-label={`${group} ${label}`}
          defaultChecked={checked}
          className="mr-[15px] size-[21px] shrink-0 appearance-none rounded-full border-2 border-[#858585] bg-[#484848] checked:border-[6px] checked:border-[#d8d8d8] checked:bg-[#303030]"
        />
      )}
      <label htmlFor={id} className={clsx(radio ? "text-[#ececec]" : "w-[62px] text-right text-[#cfcfcf]", radio && (right ? "w-[33px]" : "w-[37px]"), !radio && "mr-[7px]")}>
        {label}:
      </label>
      <input
        id={id}
        defaultValue={value}
        className={clsx("h-[30px] border-2 border-[#676767] bg-[#454545] pl-[6px] text-[19px] text-[#f2f2f2]", wide ? "w-[71px]" : "w-[57px]")}
      />
      <span className="ml-[5px] text-[#cfcfcf]">{unit}</span>
    </div>
  );
}

function ColorDialog() {
  const pill = "h-[42px] w-[186px] rounded-full border-2 text-[19px] font-medium text-[#f0f0f0]";
  return (
    <div role="dialog" aria-label="Solid Color" className="absolute top-[849px] left-[1620px] flex h-[600px] w-[856px] flex-col overflow-visible rounded-[17px] border border-black bg-[#535353] shadow-[inset_0_0_0_2px_#6e6e6e,0_24px_50px_rgba(0,0,0,0.45),0_0_30px_rgba(0,0,0,0.3)]">
      <h2 className="flex h-[45px] shrink-0 items-center justify-center rounded-t-[16px] border-b border-black bg-[#373233] pb-[2px] text-[20px] font-bold text-[#797677] shadow-[inset_0_2px_0_#5a5657]">
        Solid Color
      </h2>
      <div className="flex pl-[16px]">
        <div className="pt-[50px]">
          <ColorField className="size-[410px]" />
          <label className="mt-[20px] flex items-center gap-[15px] text-[19px] text-[#ececec]">
            <input type="checkbox" className="size-[20px] appearance-none rounded-[4px] border-2 border-[#858585] bg-[#484848]" />
            Only Web Colors
          </label>
        </div>
        <div className="ml-[3px] flex h-[467px] items-end">
          <HuePointer />
        </div>
        <HueStrip className="mt-[50px] ml-px h-[410px] w-[30px]" />
        <div className="ml-[1px] flex h-[467px] items-end">
          <HuePointer flip />
        </div>
        <div className="ml-[3px] pt-[16px]">
          <div className="flex h-[254px]">
            <div className="w-[98px] pt-[35px] text-center text-[19px] leading-[26px] text-[#cfcfcf]">
              new
              <div className="mb-[2px] h-[110px] border-2 border-[#3a3a3a]">
                <div className="h-1/2 bg-white" />
                <div className="h-1/2 bg-black" />
              </div>
              current
            </div>
            <div className="ml-[60px] flex flex-col">
              <button className={clsx(pill, "border-[#e6e6e6]")}>OK</button>
              <button className={clsx(pill, "mt-[14px] border-[#7b7b7b]")}>Cancel</button>
              <button className={clsx(pill, "mt-[25px] border-[#7b7b7b]")}>Add to Swatches</button>
              <button className={clsx(pill, "mt-[25px] border-[#7b7b7b]")}>Color Libraries</button>
            </div>
          </div>
          <div className="flex pl-px">
            <div className="w-[181px]">
              <Channel group="hsb" label="H" value="0" unit="°" checked />
              <Channel group="hsb" label="S" value="0" unit="%" />
              <Channel group="hsb" label="B" value="100" unit="%" />
              <div className="mt-[6px]">
                <Channel group="rgb" label="R" value="255" />
                <Channel group="rgb" label="G" value="255" />
                <Channel group="rgb" label="B" value="255" />
              </div>
              <div className="mt-[6px] flex h-[37px] items-center text-[19px] text-[#cfcfcf]">
                <label htmlFor="hex" className="w-[18px]">#</label>
                <input id="hex" defaultValue="ffffff" className="h-[30px] w-[136px] border-2 border-[#676767] bg-[#454545] pl-[5px] text-[19px] text-[#f2f2f2]" />
              </div>
            </div>
            <div>
              <Channel group="lab" label="L" value="100" wide right />
              <Channel group="lab" label="a" value="0" wide right />
              <Channel group="lab" label="b" value="0" wide right />
              <div className="mt-[6px]">
                <Channel group="cmyk" label="C" value="0" unit="%" radio={false} />
                <Channel group="cmyk" label="M" value="0" unit="%" radio={false} />
                <Channel group="cmyk" label="Y" value="0" unit="%" radio={false} />
                <Channel group="cmyk" label="K" value="0" unit="%" radio={false} />
              </div>
            </div>
          </div>
        </div>
      </div>
    </div>
  );
}

/* ---------- app ---------- */

export default function App() {
  return (
    <div className="relative flex h-screen w-full flex-col overflow-hidden bg-[#33366f] font-[Inter,sans-serif]">
      <MenuBar />
      <div className="flex min-h-0 flex-1 flex-col overflow-hidden rounded-t-[14px] border-2 border-[#383838] bg-[#535353]">
        <TitleBar />
        <OptionsBar />
        <div className="flex min-h-0 flex-1">
          <Toolbox />
          <DocumentArea />
          <RightDock />
        </div>
      </div>
      <FillPopup />
      <ColorDialog />
      <ErrorDialog />
    </div>
  );
}
